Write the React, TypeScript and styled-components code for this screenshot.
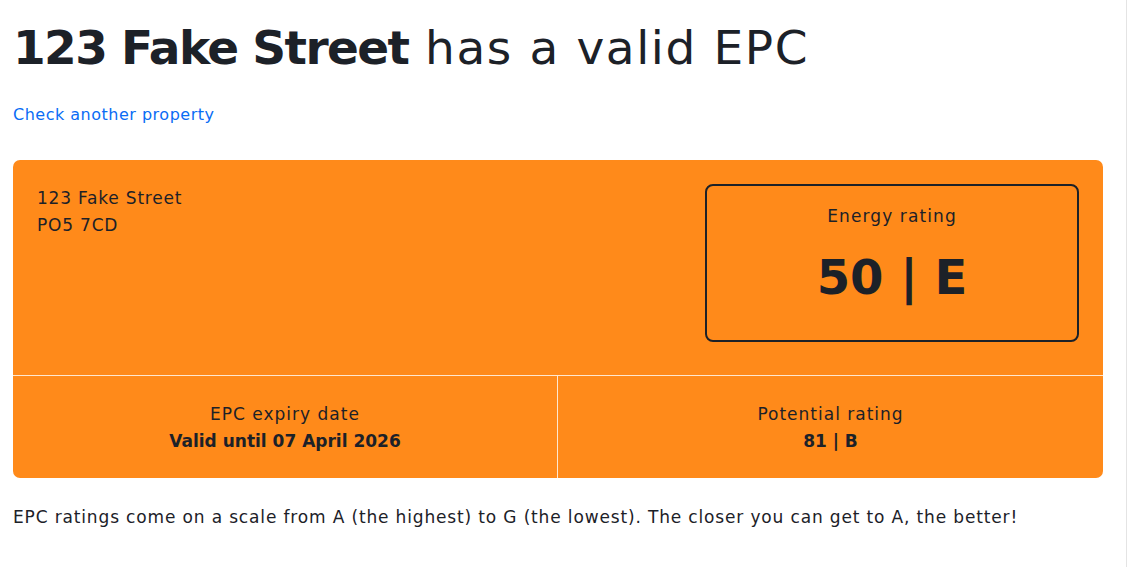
import * as React from "react";
import styled, { createGlobalStyle } from "styled-components";

const GlobalStyle = createGlobalStyle`
  html, body {
    margin: 0;
    padding: 0;
    background: #ffffff;
  }
  body {
    font-family: "DejaVu Sans", "Noto Sans", sans-serif;
    color: #1c2128;
  }
`;

const Page = styled.main`
  box-sizing: border-box;
  width: 1127px;
  min-height: 567px;
  padding: 15px 24px 0 13px;
  border-right: 1px solid #e4e4e4;
`;

const Title = styled.h1`
  margin: 0;
  font-size: 47px;
  line-height: 66px;
  font-weight: 400;
  letter-spacing: 1.6px;

  strong {
    font-weight: 700;
    letter-spacing: -1.6px;
  }
`;

const Link = styled.a`
  display: inline-block;
  margin-top: 24px;
  font-size: 16px;
  letter-spacing: 0.5px;
  color: #0a6cf5;
  text-decoration: none;
`;

const Card = styled.section`
  margin-top: 36px;
  width: 1090px;
  background: #ff8a1a;
  border-radius: 7px;
  overflow: hidden;
`;

const CardTop = styled.div`
  display: flex;
  justify-content: space-between;
  align-items: flex-start;
  padding: 24px 24px 33px 24px;
  border-bottom: 1px solid #ffe7cf;
`;

const Address = styled.div`
  font-size: 17px;
  line-height: 27px;
  letter-spacing: 0.8px;
  margin-top: 1px;
`;

const RatingBox = styled.div`
  box-sizing: border-box;
  width: 374px;
  height: 158px;
  border: 2px solid #1c2128;
  border-radius: 8px;
  display: flex;
  flex-direction: column;
  align-items: center;
  padding-top: 17px;
`;

const RatingLabel = styled.div`
  font-size: 17px;
  line-height: 26px;
  letter-spacing: 1.1px;
`;

const RatingValue = styled.div`
  margin-top: 20px;
  font-size: 48px;
  line-height: 56px;
  font-weight: 700;
`;

const CardBottom = styled.div`
  display: grid;
  grid-template-columns: 544px 1fr;
  height: 102px;
`;

const Cell = styled.div<{ $divider?: boolean }>`
  display: flex;
  flex-direction: column;
  align-items: center;
  justify-content: center;
  padding-top: 2px;
  border-left: ${(p) => (p.$divider ? "1px solid #ffe7cf" : "none")};
  font-size: 17px;
  line-height: 27px;
`;

const CellLabel = styled.div`
  font-weight: 400;
  letter-spacing: 1px;
`;

const CellValue = styled.div`
  font-weight: 700;
`;

const Note = styled.p`
  margin: 26px 0 0 0;
  font-size: 17px;
  line-height: 26px;
  letter-spacing: 0.85px;
`;

export default function App() {
  return (
    <>
      <GlobalStyle />
      <Page>
        <Title>
          <strong>123 Fake Street</strong> has a valid EPC
        </Title>
        <Link href="#">Check another property</Link>
        <Card>
          <CardTop>
            <Address>
              <div>123 Fake Street</div>
              <div>PO5 7CD</div>
            </Address>
            <RatingBox>
              <RatingLabel>Energy rating</RatingLabel>
              <RatingValue>50 | E</RatingValue>
            </RatingBox>
          </CardTop>
          <CardBottom>
            <Cell>
              <CellLabel>EPC expiry date</CellLabel>
              <CellValue>Valid until 07 April 2026</CellValue>
            </Cell>
            <Cell $divider>
              <CellLabel>Potential rating</CellLabel>
              <CellValue>81 | B</CellValue>
            </Cell>
          </CardBottom>
        </Card>
        <Note>
          EPC ratings come on a scale from A (the highest) to G (the lowest). The
          closer you can get to A, the better!
        </Note>
      </Page>
    </>
  );
}
